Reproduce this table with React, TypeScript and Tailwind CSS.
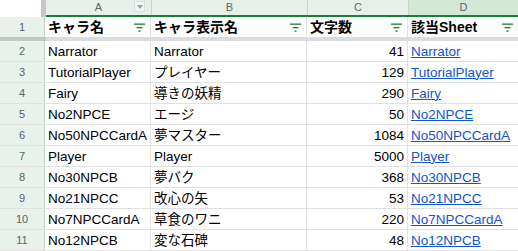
const rows: [string, string, number, string][] = [
  ['Narrator', 'Narrator', 41, 'Narrator'],
  ['TutorialPlayer', 'プレイヤー', 129, 'TutorialPlayer'],
  ['Fairy', '導きの妖精', 290, 'Fairy'],
  ['No2NPCE', 'エージ', 50, 'No2NPCE'],
  ['No50NPCCardA', '夢マスター', 1084, 'No50NPCCardA'],
  ['Player', 'Player', 5000, 'Player'],
  ['No30NPCB', '夢バク', 368, 'No30NPCB'],
  ['No21NPCC', '改心の矢', 53, 'No21NPCC'],
  ['No7NPCCardA', '草食のワニ', 220, 'No7NPCCardA'],
  ['No12NPCB', '変な石碑', 48, 'No12NPCB'],
]

function FilterIcon() {
  return (
    <svg width="11" height="9" viewBox="0 0 11 9" className="shrink-0">
      <rect x="0" y="0.5" width="11" height="1.3" fill="#188038" />
      <rect x="2.5" y="4" width="6" height="1.3" fill="#188038" />
      <rect x="4.5" y="7.5" width="2" height="1.3" fill="#188038" />
    </svg>
  )
}

function HeadCell({ label, w, last }: { label: string; w: string; last?: boolean }) {
  return (
    <div
      className={`${w} h-full flex items-center justify-between pl-[3px] pr-[5px] font-bold text-[14px] text-black ${last ? '' : 'border-r border-[#e1e1e1]'}`}
    >
      <span>{label}</span>
      <FilterIcon />
    </div>
  )
}

export default function App() {
  return (
    <div
      className="w-[518px] h-[251px] overflow-hidden bg-white text-[13.5px] leading-none"
      style={{ fontFamily: '"Liberation Sans", Arial, "Noto Sans CJK JP", sans-serif' }}
    >
      {/* column letters */}
      <div className="flex h-[17px]">
        <div className="w-[41px] bg-white" />
        <div className="w-[5px] bg-[#c4c7c5]" />
        <div className="flex flex-1 border-b-2 border-[#188038] text-[11px] text-[#5f6368]">
          <div className="w-[106px] relative flex items-center justify-center bg-[#e6f0e9] border-r border-[#c7d3cb]">
            A
            <div className="absolute right-[6px] top-[1px] w-[11px] h-[11px] bg-[#f1f3f4] border border-[#dadce0] flex items-center justify-center">
              <svg width="6" height="4" viewBox="0 0 6 4">
                <path d="M0 0h6L3 4z" fill="#9aa0a6" />
              </svg>
            </div>
          </div>
          <div className="w-[156px] flex items-center justify-center bg-[#e6f0e9] border-r border-[#c7d3cb]">B</div>
          <div className="w-[101px] flex items-center justify-center bg-[#e6f0e9] border-r border-[#c7d3cb]">C</div>
          <div className="flex-1 flex items-center justify-center bg-[#d2e9d8]">D</div>
        </div>
      </div>

      {/* header row 1 */}
      <div className="flex h-[20px]">
        <div className="w-[45px] flex items-center justify-center bg-[#e8f1ea] border-r border-[#c7d3cb] text-[11px] text-[#5f6368]">
          1
        </div>
        <HeadCell label="キャラ名" w="w-[106px]" />
        <HeadCell label="キャラ表示名" w="w-[156px]" />
        <HeadCell label="文字数" w="w-[101px]" />
        <HeadCell label="該当Sheet" w="flex-1" last />
      </div>
      <div className="flex h-[4px]">
        <div className="w-[46px] bg-[#c4c7c5]" />
        <div className="flex-1 bg-[#dadce0]" />
      </div>

      {rows.map((r, i) => (
        <div key={i} className="flex h-[21px] border-b border-[#e1e1e1]">
          <div className="w-[45px] flex items-center justify-center bg-[#e8f1ea] border-r border-[#c7d3cb] text-[11px] text-[#5f6368]">
            {i + 2}
          </div>
          <div className="w-[106px] flex items-end pb-[3px] pl-[3px] border-r border-[#e1e1e1] text-black whitespace-nowrap overflow-hidden">
            {r[0]}
          </div>
          <div className="w-[156px] flex items-end pb-[3px] pl-[3px] border-r border-[#e1e1e1] text-black whitespace-nowrap">
            {r[1]}
          </div>
          <div className="w-[101px] flex items-end justify-end pb-[3px] pr-[3px] border-r border-[#e1e1e1] text-black">
            {r[2]}
          </div>
          <div className="flex-1 flex items-end pb-[3px] pl-[3px] whitespace-nowrap">
            <span className="text-[#1155cc] underline">{r[3]}</span>
          </div>
        </div>
      ))}
    </div>
  )
}
